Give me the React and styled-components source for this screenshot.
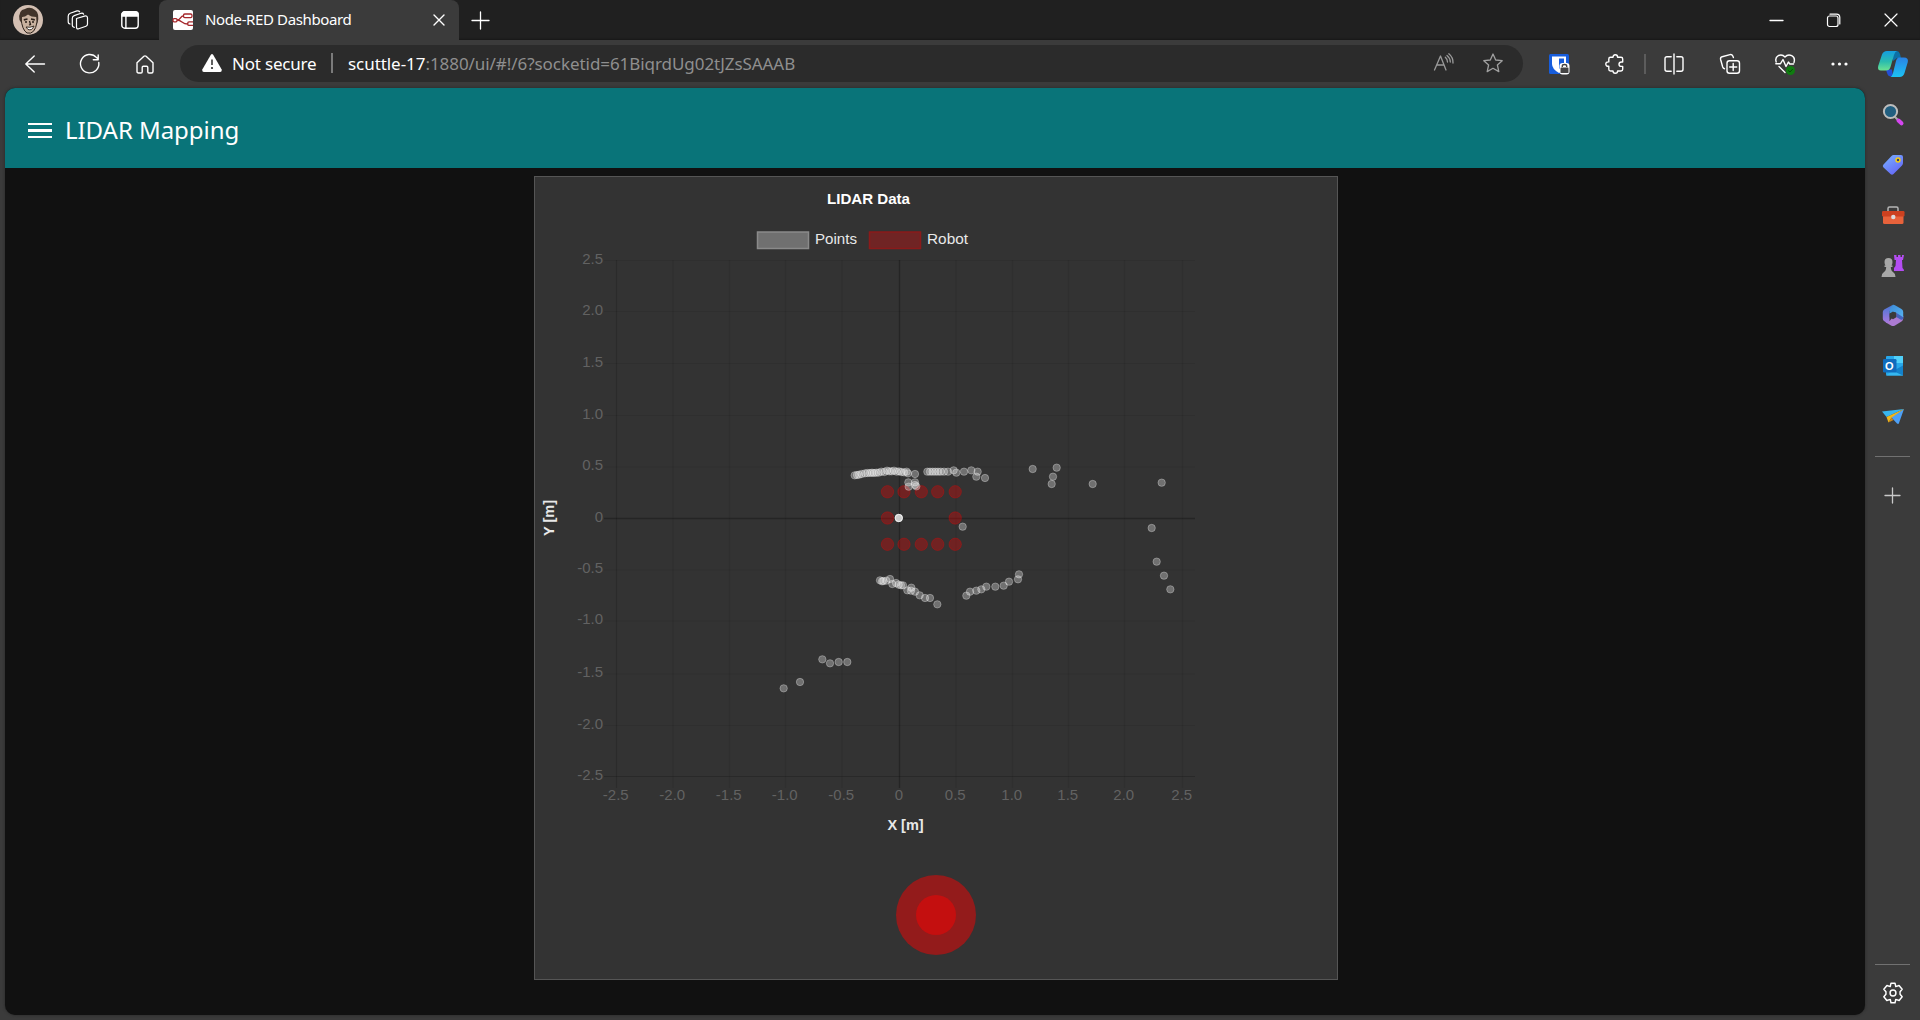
import React from 'react';
import styled, { createGlobalStyle } from 'styled-components';

const Global = createGlobalStyle`
  * { box-sizing: border-box; }
  body { margin: 0; background: #3b3b3b; overflow: hidden; }
  svg { display: block; overflow: visible; }
`;

const UI_FONT = '"Noto Sans", "Open Sans", sans-serif';

const Browser = styled.div`
  width: 1920px;
  height: 1020px;
  display: flex;
  flex-direction: column;
  background: #3b3b3b;
  font-family: ${UI_FONT};
  color: #fff;
`;

const Spacer = styled.div`
  flex: ${(p) => (p.$w ? `0 0 ${p.$w}px` : '1')};
`;

const IconBox = styled.div`
  flex: 0 0 ${(p) => p.$w}px;
  height: ${(p) => p.$h || 40}px;
  display: flex;
  align-items: center;
  justify-content: center;
`;

const TabStrip = styled.div`
  height: 40px;
  display: flex;
  background: #202020;
  box-shadow: inset 0 -2px 2px -1px #181818;
`;

const Tab = styled.div`
  width: 300px;
  height: 40px;
  display: flex;
  align-items: center;
  padding: 0 9px 0 14px;
  background: #3b3b3b;
  border-radius: 8px 8px 0 0;
`;

const TabTitle = styled.div`
  flex: 1;
  margin-left: 12px;
  padding-bottom: 2px;
  font-size: 15px;
  line-height: 20px;
  letter-spacing: -0.38px;
  white-space: nowrap;
`;

const Toolbar = styled.div`
  height: 48px;
  display: flex;
  align-items: center;
`;

const AddressBar = styled.div`
  width: 1343px;
  height: 37px;
  margin-bottom: 2px;
  display: flex;
  align-items: center;
  background: #2b2b2b;
  border-radius: 19px;
  padding-left: 22px;
  font-size: 17px;
  white-space: nowrap;
`;

const Secure = styled.div`
  width: 84px;
  margin-left: 10px;
  letter-spacing: -0.2px;
`;

const Bar = styled.div`
  width: 2px;
  height: 20px;
  background: ${(p) => p.$c || '#7b7b7b'};
`;

const Url = styled.div`
  margin-left: 15px;
  color: #8f8f8f;
  letter-spacing: -0.06px;
  span { color: #fff; }
`;

const Body = styled.div`
  height: 932px;
  display: flex;
  padding-left: 5px;
`;

const Page = styled.main`
  width: 1860px;
  height: 927px;
  background: #111;
  border-radius: 10px;
  overflow: hidden;
  box-shadow: 0 0 3px #252525;
`;

const Header = styled.header`
  height: 80px;
  display: flex;
  align-items: center;
  padding: 5px 0 0 23px;
  background: #097479;
`;

const Burger = styled.div`
  width: 24px;
  display: grid;
  gap: 4px;
  i { height: 2.6px; background: #fff; }
`;

const Title = styled.h1`
  margin: 0 0 0 13px;
  padding-bottom: 1px;
  font-size: 24px;
  line-height: 32px;
  font-weight: 400;
  letter-spacing: -0.05px;
  white-space: nowrap;
`;

const Card = styled.section`
  width: 804px;
  height: 804px;
  margin: 8px 0 0 529px;
  background: #333;
  border: 1px solid #555;
`;

const ChartText = styled.text`
  font-family: "Liberation Sans", Arial, sans-serif;
  font-size: ${(p) => p.$size || 15}px;
  font-weight: ${(p) => (p.$bold ? 700 : 400)};
  fill: ${(p) => p.$fill || '#626262'};
  text-anchor: ${(p) => p.$anchor || 'middle'};
`;

const RecordRing = styled.div`
  width: 80px;
  height: 80px;
  margin: 38px auto 0;
  border-radius: 50%;
  background: #931b1b;
  display: grid;
  place-items: center;
`;

const RecordDot = styled.div`
  width: 40px;
  height: 40px;
  border-radius: 50%;
  background: #c40f0f;
`;

const Sidebar = styled.aside`
  width: 55px;
  display: flex;
  flex-direction: column;
  align-items: center;
  padding-top: 2px;
`;

const SideItem = styled.div`
  height: ${(p) => p.$h || 50.2}px;
  flex: none;
  display: flex;
  align-items: center;
`;

const SideRule = styled.div`
  width: 35px;
  height: 1px;
  background: #717171;
  flex: none;
`;

/* ---------- icons ---------- */

const Line = ({ w = 20, h = w, sw = 1.3, c = '#fff', box, children }) => (
  <svg width={w} height={h} viewBox={box || `0 0 ${w} ${h}`} fill="none" stroke={c} strokeWidth={sw} strokeLinecap="round" strokeLinejoin="round">
    {children}
  </svg>
);

const Avatar = () => (
  <svg width="30" height="30" viewBox="0 0 30 30">
    <circle cx="15" cy="15" r="15" fill="#d3bfb2" />
    <path d="M8 13 Q9 25 14 28 Q22 30 24 17 L24 10 Q16 6 9 11Z" fill="#c9b29f" stroke="#2b211a" strokeWidth="1" />
    <path d="M6.500 15 Q5 5 12 4 Q17 1 22 5 Q27 8 24.500 19 L23.500 12 Q18 12 15 9.500 Q12 12 9 12 L8.500 18Z" fill="#41342a" />
    <path d="M10.800 14.800 L14.500 14 M18 14 L21.800 14.800" stroke="#2b211a" strokeWidth="1.700" fill="none" />
    <path d="M12 17h2 M19 17h2 M16.500 16 L17.500 19.500 L16 20" stroke="#2b211a" strokeWidth="1.300" fill="none" />
    <path d="M13 22 Q17 23 21 21 Q19 26 15 24.500Z" fill="#fff" stroke="#2b211a" strokeWidth=".9" />
  </svg>
);

const Workspaces = () => (
  <Line w={22} h={20} sw={1.2}>
    <path d="M9.500 8.500 L17.500 6.100 Q20.500 5.400 20.500 8 V14 Q20.500 15.800 19 16.300 L11.700 18.800 Q9.500 19.500 9.500 17Z" />
    <path d="M7.300 17.300 Q5.300 17.300 5.300 15 V8.200 Q5.300 6.200 7.200 5.600 L14 3.300 Q16 2.800 16.600 4.200" />
    <path d="M3 14 Q1.200 13.800 1.200 11.500 V6.300 Q1.200 4 3.200 3.300 L10 .9 Q12 .5 12.600 1.800" />
  </Line>
);

const TabActions = () => (
  <Line w={18} sw={1.4}>
    <rect x=".8" y=".8" width="16.400" height="16.400" rx="3" />
    <path d="M1 3.500 Q1 1 3.500 1 H14.500 Q17 1 17 3.500 V5 H1Z" fill="#fff" />
    <path d="M4.900 5V17" />
  </Line>
);

const NodeRed = () => (
  <svg width="20" height="20" viewBox="0 0 20 20">
    <rect width="20" height="20" rx="2" fill="#fff" />
    <g fill="none" stroke="#a5272b" strokeWidth="1.300">
      <rect x="10.500" y="4" width="8.500" height="3.600" rx="1.300" />
      <rect x="0" y="8.600" width="4" height="3.200" rx="1" />
      <path d="M4 10 C8 10 7 5.800 10.500 5.800 M4 10 C9 10 9 14 14.500 14 M20 11.800 H16 Q14.800 11.800 14.800 13 V14.200 Q14.800 15.400 16 15.400 H20" />
    </g>
  </svg>
);

const Back = () => (<Line w={20} h={18} sw={1.4}><path d="M19.500 9H.8 M9.200 1L.8 9L9.200 17" /></Line>);
const Reload = () => (<Line w={20} sw={1.4}><path d="M18.800 8.500A9.200 9.200 0 1 1 16.600 3.600L18.200 5.200 M18.200 1V5.800H13.300" /></Line>);
const Home = () => (<Line w={18} h={19} sw={1.4}><path d="M1 7.700 L7.900 1.300 Q9 .4 10.100 1.300 L17 7.700 V16.500 Q17 18 15.500 18 H13 Q11.800 18 11.800 16.800 V12.500 Q11.800 11.300 10.600 11.300 H7.400 Q6.200 11.300 6.200 12.500 V16.800 Q6.200 18 5 18 H2.500 Q1 18 1 16.500Z" /></Line>);

const Warning = () => (
  <svg width="20" height="18" viewBox="0 0 20 18">
    <path d="M8.700 .9 Q10 -.9 11.300 .9 L19.700 15.600 Q20.300 17.800 18.300 18 H1.700 Q-.3 17.800 .3 15.600Z" fill="#fff" />
    <path d="M10 5.500V11" stroke="#2b2b2b" strokeWidth="1.500" />
    <circle cx="10" cy="14" r="1.100" fill="#2b2b2b" />
  </svg>
);

const ReadAloud = () => (
  <Line w={20} c="#9a9a9a"><path d="M.5 17L6.500 3L12 17 M2.700 12H10 M11.300 4.200Q13.500 6 13.500 9 M13 2.400Q16.300 5 16.300 9 M14.800 .8Q19.300 4.500 19 10" /></Line>
);
const Star = () => (
  <Line w={20} c="#a0a0a0"><path d="M10 1 L12.700 7 L19.200 7.700 L14.400 12 L15.800 18.600 L10 15.300 L4.200 18.600 L5.600 12 L.8 7.700 L7.300 7Z" /></Line>
);

const Bitwarden = () => (
  <svg width="20" height="20" viewBox="0 0 20 20">
    <rect width="20" height="20" rx="1.500" fill="#175ddc" />
    <path d="M3 2.500H17V10Q17 15 10 19Q3 15 3 10Z" fill="#fff" />
    <path d="M10 4.500H15V10Q14 13 10 15Z" fill="#175ddc" />
    <rect x="10.500" y="9" width="10" height="11.500" rx="3" fill="#fff" />
    <rect x="11.500" y="13.500" width="8" height="5.500" rx=".6" fill="#444" />
    <path d="M13.300 13V12Q13.300 10.500 15.500 10.500T17.700 12V13" fill="none" stroke="#444" strokeWidth="1.400" />
  </svg>
);

const Puzzle = () => (
  <Line w={20} sw={1.4}><path d="M5.500 3.300 H8 Q8 .7 10.300 .7 T12.600 3.300 H16 Q17.700 3.300 17.700 5 V8 H16.500 Q14 8 14 10.200 T16.500 12.400 H17.700 V15.300 Q17.700 17 16 17 H12.600 Q12.600 19.300 10.300 19.300 T8 17 H5.500 Q3.800 17 3.800 15.300 V12.300 Q.8 12.500 .8 10.100 T3.800 7.900 V5 Q3.800 3.300 5.500 3.300" /></Line>
);
const Split = () => (
  <Line w={20} sw={1.4}><path d="M10 0V20 M7.200 2.700H3Q1 2.700 1 4.700V15.300Q1 17.300 3 17.300H7.200 M12.800 2.700H17Q19 2.700 19 4.700V15.300Q19 17.300 17 17.300H12.800" /></Line>
);
const Collections = () => (
  <Line w={20} sw={1.4}>
    <rect x="7" y="6.700" width="12.500" height="12.500" rx="2.500" />
    <path d="M13.200 9.500V16.500 M9.700 13H16.700 M4.500 14.700 Q3.200 14.500 2.700 13 L.6 5.500 Q.1 3.400 2.200 2.700 L10 .6 Q12 .2 12.800 2 L13.400 3.600" />
  </Line>
);
const Health = () => (
  <Line w={21} h={20} sw={1.4}>
    <path d="M1.200 8Q-.3 3.500 3.300 1.600Q7.200 -.2 10 3Q12.800 -.2 16.700 1.600Q20.500 3.500 19 8.500 M4 12.500L10 18.500 M.8 9.700H5.500L8 5.500L11 12.500L13.400 8L14.800 10H18.500" />
    <circle cx="15.500" cy="16.500" r="4.500" fill="#107c10" stroke="none" />
    <path d="M13.500 16.700L15 18L17.500 15.300" stroke="#084a08" strokeWidth="1" />
  </Line>
);
const Dots = () => (<svg width="17" height="4"><circle cx="2" cy="2" r="1.600" fill="#fff" /><circle cx="8.500" cy="2" r="1.600" fill="#fff" /><circle cx="15" cy="2" r="1.600" fill="#fff" /></svg>);

const Copilot = () => (
  <svg width="30" height="28" viewBox="0 0 30 28">
    <defs>
      <linearGradient id="cpA" x1="0" y1="0" x2="0" y2="1"><stop offset="0" stopColor="#149de0" /><stop offset=".55" stopColor="#2bbcae" /><stop offset="1" stopColor="#6ce292" /></linearGradient>
      <linearGradient id="cpB" x1="0" y1="0" x2="0" y2="1"><stop offset="0" stopColor="#2a82e4" /><stop offset="1" stopColor="#1cc3f4" /></linearGradient>
    </defs>
    <path d="M15 1H19Q21 1 22 4L23 8H19L15 11Z" fill="#0c6fa6" />
    <path d="M8 19.500H14L15 26.500H13Q10 26.500 9 23Z" fill="#2350d5" />
    <path d="M9 1H19Q17 1.500 16 5L12.500 17Q11.500 20.500 8 20.500H3Q-.8 20.500 .2 16L4 4.500Q5.300 1 9 1Z" fill="url(#cpA)" />
    <path d="M21 7.500H26Q30.700 7.500 29.800 12L26.500 23Q25.300 27 21.500 27H12.500Q14 26.500 15 23L18 11Q19 7.500 21 7.500Z" fill="url(#cpB)" />
  </svg>
);

const SearchColor = () => (
  <svg width="22" height="22" viewBox="0 0 22 22">
    <path d="M12.500 12.500L15.500 15.500" stroke="#aaa" strokeWidth="2" />
    <path d="M16.500 16.500L19.500 19.300" stroke="#d546f0" strokeWidth="4" strokeLinecap="round" />
    <circle cx="8.500" cy="7.500" r="6.600" fill="#225f80" stroke="#bdbdbd" strokeWidth="2" />
  </svg>
);
const Tag = () => (
  <svg width="22" height="22" viewBox="0 0 22 22">
    <defs><linearGradient id="tg" x1="0" y1="0" x2=".7" y2="1"><stop offset="0" stopColor="#78b4ff" /><stop offset="1" stopColor="#6566f7" /></linearGradient></defs>
    <path d="M11.500 1H19Q21 1 21 3V9Q21 10 20 11.500L11.500 20Q10 21.500 8.500 20L1.500 13.500Q0 12 1.500 10.500L9.500 2Q10.500 1 11.500 1Z" fill="url(#tg)" />
    <circle cx="16" cy="6" r="2" fill="#34406f" stroke="#f5cc16" strokeWidth="1.500" />
  </svg>
);
const Toolbox = () => (
  <svg width="24" height="20" viewBox="0 0 24 20">
    <path d="M7 6V3.500Q7 2 8.500 2H15.500Q17 2 17 3.500V6" fill="none" stroke="#b5b5b5" strokeWidth="1.500" />
    <rect x="2" y="10" width="20.500" height="9" rx="1.500" fill="#e7623b" />
    <rect x="1" y="6" width="22.500" height="5.500" rx="1.200" fill="#cc4120" />
    <circle cx="12.300" cy="12" r="2.200" fill="#ddd" />
  </svg>
);
const Chess = () => (
  <svg width="23" height="24" viewBox="0 0 23 24">
    <path d="M13 1H15.500V3H17V1H19.500V3H21V1H23L22 6H21L21.500 14Q23 15 23 17H13V14L14.500 12L15 6H13.500Z" fill="#b44df2" />
    <path d="M3.500 8Q3.500 4 7.500 4T11.500 8Q11.500 10 10.500 11.500H11.500V13H9.800Q10 17 12 18Q14.500 19.500 14.500 23H.5Q.5 19.500 3 18Q5 17 5.200 13H3.500V11.500H4.500Q3.500 10 3.500 8Z" fill="#a7a7a7" />
  </svg>
);
const M365 = () => (
  <svg width="22" height="23" viewBox="0 0 22 23">
    <defs>
      <linearGradient id="ma" x1="0" y1="0" x2="0" y2="1"><stop offset="0" stopColor="#4678d6" /><stop offset="1" stopColor="#a978df" /></linearGradient>
      <linearGradient id="mc" x1="0" y1="0" x2="1" y2="1"><stop offset="0" stopColor="#3b8bd6" /><stop offset="1" stopColor="#57b3f2" /></linearGradient>
    </defs>
    <path d="M14 9L21.200 12V14.500Q21.200 16.500 19.500 17.500L13 21.500Q11 22.700 9 21.500L3.500 18.200Q6.500 18 8 16.500Z" fill="#ac7bd2" />
    <path d="M14.300 8.500L21.200 12V14.500Q20.500 16.500 18.500 15.500L14.300 13Z" fill="#4463bd" />
    <path d="M11 .8L7.500 7.500V14.500Q8 18.500 5 19L2 17Q.8 16.300 .8 14.500V8Q.8 6.500 2.200 5.500Z" fill="url(#ma)" />
    <path d="M11 .8Q12 .6 13 1.200L19.500 5Q21.200 6 21.200 8V13.300L13 8L7.500 9.500V7.500Q7.500 3.500 11 .8Z" fill="url(#mc)" />
    <path d="M11 7.500L14.300 9.400V13.300L11 15.200L7.700 13.300V9.400Z" fill="#3b3b3b" />
  </svg>
);
const OutlookLetter = styled.text`
  font: 700 11px "Liberation Sans", Arial, sans-serif;
  fill: #fff;
  text-anchor: middle;
`;
const Outlook = () => (
  <svg width="22" height="22" viewBox="0 0 22 22">
    <rect x="4" y="1" width="17" height="19.500" rx="1" fill="#28a8ea" />
    <path d="M12 1H21V8H12Z" fill="#50d0fa" />
    <path d="M4 20.500H21V18L11 15.500Z" fill="#35b8f1" />
    <path d="M21 10.500L11 16L21 20.500Z" fill="#1482cb" />
    <rect x="1" y="4" width="13.500" height="13.500" rx="1.200" fill="#0f6cbd" />
    <OutlookLetter x="7.400" y="14.800">O</OutlookLetter>
  </svg>
);
const Drop = () => (
  <svg width="22" height="17" viewBox="0 0 22 17">
    <path d="M0 3.500L22 1L4.500 9Z" fill="#38b6ef" />
    <path d="M22 1L17 15Q16.500 16.500 15 15.500L9 9Z" fill="#4d9ff5" />
    <path d="M4.500 9L22 1L9.500 9.800L6.500 14.500Z" fill="#f0b71b" />
    <path d="M6.500 14.500L9.500 9.800L11.500 12Z" fill="#cc8617" />
  </svg>
);
const Plus = ({ w, sw = 1.3, c = '#fff' }) => (<Line w={w} sw={sw} c={c}><path d={`M${w / 2} 0V${w} M0 ${w / 2}H${w}`} /></Line>);
const Gear = () => (
  <Line w={22} sw={1.6} box="0 0 24 24">
    <path d="M9.800 1.300H14.200L15 5L18.600 3.900L22 8L19.700 10.600V13.400L22 16L18.700 20.100L15 19L14.200 22.700H9.800L9 19L5.300 20.100L2 16L4.300 13.400V10.600L2 8L5.400 3.900L9 5Z" />
    <circle cx="12" cy="12" r="3.200" />
  </Line>
);

/* ---------- chart ---------- */

const XT = [[616.5, '-2.5'], [673, '-2.0'], [729.5, '-1.5'], [785.5, '-1.0'], [842, '-0.5'], [899.5, '0'], [956, '0.5'], [1012.5, '1.0'], [1068.5, '1.5'], [1124.5, '2.0'], [1182.5, '2.5']];
const YT = [[260.5, '2.5'], [311.5, '2.0'], [363.5, '1.5'], [415.5, '1.0'], [467, '0.5'], [518.5, '0'], [570, '-0.5'], [621, '-1.0'], [674, '-1.5'], [725.5, '-2.0'], [776.5, '-2.5']];

const POINTS = [
  [44, 106], [51, 105], [57, 104], [65, 102], [75, 100], [82, 99], [90, 99], [96, 98], [102, 99], [109, 98], [116, 98], [124, 95], [133, 96], [141, 92], [148, 94], [155, 94], [162, 92], [170, 95], [177, 94], [184, 96], [192, 97], [200, 95], [204, 100],
  [225, 102], [205, 127], [206, 140], [225, 127], [225, 135], [229, 139],
  [262, 95], [270, 95], [278, 95], [286, 95], [294, 95], [302, 95], [312, 95], [324, 95], [341, 91], [349, 98], [372, 95], [394, 91], [413, 95], [409, 110], [435, 114],
  [578, 87], [650, 83], [639, 110], [635, 132], [758, 132], [965, 128], [935, 264], [950, 365], [972, 407], [991, 448], [368, 260],
  [120, 421], [126, 424], [130, 423], [139, 422], [150, 417], [157, 432], [168, 429], [176, 434], [183, 436], [189, 436], [202, 451], [214, 443], [213, 452], [225, 455], [239, 466], [255, 474], [270, 474], [292, 493],
  [379, 467], [390, 455], [409, 452], [424, 448], [439, 440], [466, 440], [491, 437], [507, 425], [534, 418], [537, 403],
].map(([x, y]) => [840 + x / 3, 440 + y / 3]).concat(
  [[877, 118], [900, 130], [926, 126], [952, 126], [810, 186], [761, 205]].map(([x, y]) => [530 + x / 3, 620 + y / 3]),
  Array.from({ length: 4 }, () => [898.8, 518]),
);

const ROBOT = [887.5, 904, 921.3, 937.7, 955.2].flatMap((x) => [[x, 491.8], [x, 544.3]]).concat([[887.5, 518], [955.2, 518]]);

const Chart = () => (
  <svg width="802" height="660" viewBox="535 177 802 660">
    <ChartText x="868.500" y="203.500" $bold $fill="#fff" $size={14.5} textLength="83" lengthAdjust="spacingAndGlyphs">LIDAR Data</ChartText>
    <rect x="757.500" y="232" width="51" height="16.500" fill="#707070" stroke="#8a8a8a" strokeWidth="1.500" />
    <ChartText x="815" y="244" $anchor="start" $fill="#e8e8e8" textLength="42" lengthAdjust="spacingAndGlyphs">Points</ChartText>
    <rect x="869.500" y="232" width="51" height="16.500" fill="#702424" stroke="#8b1a1a" strokeWidth="1.500" />
    <ChartText x="927" y="244" $anchor="start" $fill="#e8e8e8" textLength="41" lengthAdjust="spacingAndGlyphs">Robot</ChartText>
    {XT.map(([x, t], i) => (
      <g key={t}>
        <path d={`M${x} 260V788`} stroke="#000" strokeOpacity={i === 5 ? 0.26 : i === 0 ? 0.15 : 0.08} strokeWidth={i === 5 ? 1.4 : 1.2} />
        <ChartText x={x - 0.7} y="800">{t}</ChartText>
      </g>
    ))}
    {YT.map(([y, t], i) => (
      <g key={t}>
        <path d={`M604 ${y}H1195`} stroke="#000" strokeOpacity={i === 5 ? 0.26 : i === 10 ? 0.18 : 0.08} strokeWidth={i === 5 ? 1.4 : 1.2} />
        <ChartText x="603" y={y + 3.3} $anchor="end">{t}</ChartText>
      </g>
    ))}
    {ROBOT.map(([x, y], i) => (
      <circle key={i} cx={x} cy={y} r="6.200" fill="#f00000" fillOpacity=".33" stroke="#f00000" strokeOpacity=".3" />
    ))}
    {POINTS.map(([x, y], i) => (
      <circle key={i} cx={x} cy={y} r="3.700" fill="#fff" fillOpacity=".3" stroke="#fff" strokeOpacity=".3" />
    ))}
    <ChartText x="905.500" y="830" $bold $fill="#e8e8e8" $size={14.5}>X [m]</ChartText>
    <ChartText transform="translate(554 518) rotate(-90)" $bold $fill="#e8e8e8" $size={14.5}>Y [m]</ChartText>
  </svg>
);

const SIDE_ICONS = [SearchColor, Tag, Toolbox, Chess, M365, Outlook, Drop];

export default function App() {
  return (
    <Browser>
      <Global />
      <TabStrip>
        <IconBox $w={56}><Avatar /></IconBox>
        <IconBox $w={44}><Workspaces /></IconBox>
        <IconBox $w={59}><TabActions /></IconBox>
        <Tab>
          <NodeRed />
          <TabTitle>Node-RED Dashboard</TabTitle>
          <IconBox $w={22}><Line w={10} sw={1.4}><path d="M0 0L10 10M10 0L0 10" /></Line></IconBox>
        </Tab>
        <IconBox $w={43}><Plus w={17} /></IconBox>
        <Spacer />
        <IconBox $w={57}><Line w={13} h={1}><path d="M0 .5H13" /></Line></IconBox>
        <IconBox $w={57}>
          <Line w={13} sw={1.2}><rect x=".5" y="2" width="10.500" height="10.500" rx="2" /><path d="M3 .2H9.500Q12.800 .2 12.800 3.500V10" /></Line>
        </IconBox>
        <IconBox $w={58}><Line w={12} sw={1.2}><path d="M0 0L12 12M12 0L0 12" /></Line></IconBox>
      </TabStrip>
      <Toolbar>
        <Spacer $w={7} />
        <IconBox $w={56}><Back /></IconBox>
        <IconBox $w={54}><Reload /></IconBox>
        <IconBox $w={56}><Home /></IconBox>
        <Spacer $w={7} />
        <AddressBar>
          <Warning />
          <Secure>Not secure</Secure>
          <Spacer $w={15} />
          <Bar />
          <Url><span>scuttle-17</span>:1880/ui/#!/6?socketid=61BiqrdUg02tJZsSAAAB</Url>
          <Spacer />
          <IconBox $w={49}><ReadAloud /></IconBox>
          <IconBox $w={49}><Star /></IconBox>
          <Spacer $w={6} />
        </AddressBar>
        <Spacer $w={8} />
        <IconBox $w={56}><Bitwarden /></IconBox>
        <IconBox $w={55}><Puzzle /></IconBox>
        <Spacer $w={2} />
        <Bar $c="#5c5c5c" />
        <Spacer $w={1} />
        <IconBox $w={54}><Split /></IconBox>
        <IconBox $w={57}><Collections /></IconBox>
        <IconBox $w={54}><Health /></IconBox>
        <IconBox $w={55}><Dots /></IconBox>
        <Spacer $w={11} />
        <Copilot />
      </Toolbar>
      <Body>
        <Page>
          <Header>
            <Burger><i /><i /><i /></Burger>
            <Title>LIDAR Mapping</Title>
          </Header>
          <Card>
            <Chart />
            <RecordRing><RecordDot /></RecordRing>
          </Card>
        </Page>
        <Sidebar>
          {SIDE_ICONS.map((Icon, i) => (<SideItem key={i}><Icon /></SideItem>))}
          <Spacer $w={15} />
          <SideRule />
          <SideItem $h={77}><Plus w={15} c="#c9c9c9" /></SideItem>
          <Spacer />
          <SideRule />
          <SideItem $h={55}><Gear /></SideItem>
        </Sidebar>
      </Body>
    </Browser>
  );
}
